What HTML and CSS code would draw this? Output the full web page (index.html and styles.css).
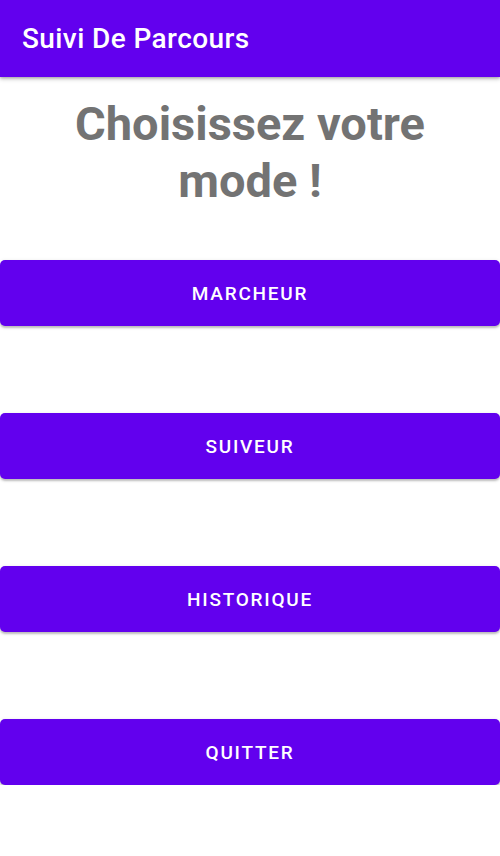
FILE: index.html
```html
<!DOCTYPE html>
<html lang="fr">
<head>
<meta charset="utf-8">
<title>Suivi De Parcours</title>
<link rel="stylesheet" href="styles.css">
</head>
<body>
<header class="app-bar">
  <h1 class="app-title">Suivi De Parcours</h1>
</header>
<main class="content">
  <h2 class="heading">Choisissez votre mode !</h2>
  <div class="buttons">
    <button class="mode-btn">Marcheur</button>
    <button class="mode-btn">Suiveur</button>
    <button class="mode-btn">Historique</button>
    <button class="mode-btn">Quitter</button>
  </div>
</main>
</body>
</html>
```
FILE: styles.css
```css
* { box-sizing: border-box; }
html, body {
  margin: 0;
  padding: 0;
  background: #ffffff;
  font-family: Roboto, "Noto Sans", sans-serif;
}
.app-bar {
  height: 77px;
  background: #6200ee;
  display: flex;
  align-items: center;
  padding: 0 22px;
  box-shadow: 0 2px 4px rgba(0,0,0,0.25), 0 1px 2px rgba(0,0,0,0.15);
  position: relative;
  z-index: 1;
}
.app-title {
  margin: 0;
  color: #ffffff;
  font-size: 28px;
  font-weight: 500;
  letter-spacing: 0.4px;
  line-height: 1;
}
.content {
  display: flex;
  flex-direction: column;
}
.heading {
  margin: 18px 30px 0;
  text-align: center;
  color: #737373;
  font-size: 47px;
  font-weight: 700;
  line-height: 57px;
}
.buttons {
  display: flex;
  flex-direction: column;
  gap: 87px;
  margin-top: 51px;
}
.mode-btn {
  height: 66px;
  width: 100%;
  border: none;
  border-radius: 5px;
  background: #6200ee;
  color: #ffffff;
  font-family: Roboto, "Noto Sans", sans-serif;
  font-size: 19px;
  font-weight: 500;
  letter-spacing: 1.75px;
  text-transform: uppercase;
  box-shadow: 0 2px 2px rgba(0,0,0,0.2), 0 1px 4px rgba(0,0,0,0.12);
  padding: 0;
}
```
